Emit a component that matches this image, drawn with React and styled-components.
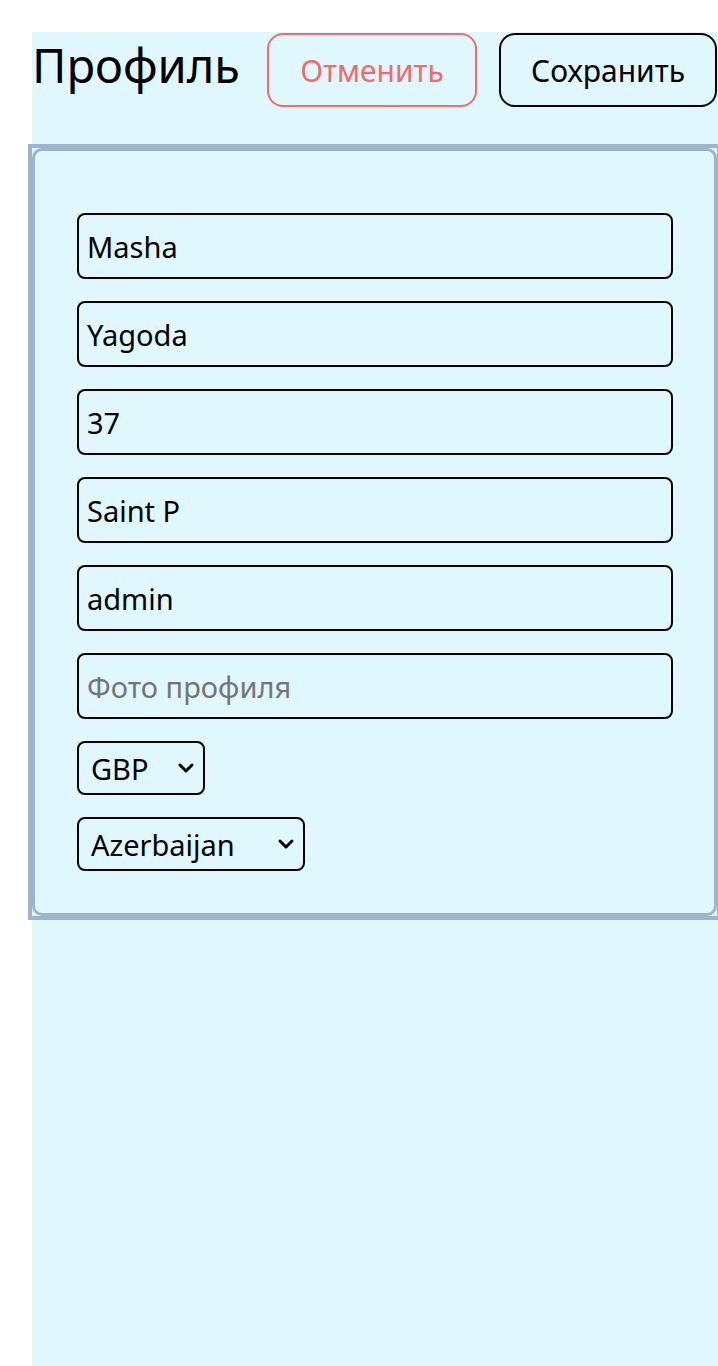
import React, { useState } from 'react';
import styled, { createGlobalStyle } from 'styled-components';
import { ChevronDown } from 'lucide-react';

const GlobalStyle = createGlobalStyle`
	body {
		margin: 0;
		font-family: 'Noto Sans', 'DejaVu Sans', sans-serif;
		background: #ffffff;
	}
`;

const fields = [
	{ name: 'firstName', value: 'Masha', placeholder: 'Имя' },
	{ name: 'lastName', value: 'Yagoda', placeholder: 'Фамилия' },
	{ name: 'age', value: '37', placeholder: 'Возраст' },
	{ name: 'city', value: 'Saint P', placeholder: 'Город' },
	{ name: 'role', value: 'admin', placeholder: 'Роль' },
	{ name: 'photo', value: '', placeholder: 'Фото профиля' },
];

const Dropdown = ({ width, value, onChange, options }) => (
	<SelectWrap $width={width}>
		<Select value={value} onChange={onChange}>
			{options.map((o) => (
				<option key={o}>{o}</option>
			))}
		</Select>
		<Chevron size={24} strokeWidth={3} />
	</SelectWrap>
);

// Exported Component
const App = () => {
	const [form, setForm] = useState(
		Object.fromEntries(fields.map((f) => [f.name, f.value]))
	);
	const [currency, setCurrency] = useState('GBP');
	const [country, setCountry] = useState('Azerbaijan');

	return (
		<>
			<GlobalStyle />
			<Page>
				<Header>
					<Title>Профиль</Title>
					<Button $variant='cancel' $width={210}>
						Отменить
					</Button>
					<Button $width={218}>Сохранить</Button>
				</Header>
				<Frame>
					<Card>
						{fields.map((f) => (
							<Input
								key={f.name}
								value={form[f.name]}
								placeholder={f.placeholder}
								onChange={(e) =>
									setForm({ ...form, [f.name]: e.target.value })
								}
							/>
						))}
						<Dropdown
							width={128}
							value={currency}
							onChange={(e) => setCurrency(e.target.value)}
							options={['GBP', 'USD', 'EUR', 'RUB']}
						/>
						<Dropdown
							width={228}
							value={country}
							onChange={(e) => setCountry(e.target.value)}
							options={['Azerbaijan', 'Armenia', 'Georgia', 'Russia']}
						/>
					</Card>
				</Frame>
			</Page>
		</>
	);
};

const Page = styled.main`
	margin: 32px 0 0 32px;
	width: 690px;
	min-height: calc(100vh - 32px);
	background: #e0f7fd;
`;

const Header = styled.header`
	display: flex;
	align-items: flex-start;
	gap: 22px;
	padding-top: 1px;
	height: 111px;
`;

const Title = styled.h1`
	margin: 0 5px 0 0;
	font-size: 47px;
	font-weight: 400;
	line-height: 64px;
	color: #000;
	white-space: nowrap;
`;

const Button = styled.button`
	flex: none;
	box-sizing: border-box;
	width: ${(p) => p.$width}px;
	height: 74px;
	padding: 0;
	background: transparent;
	border: 2px solid ${(p) => (p.$variant === 'cancel' ? '#f46b6b' : '#000')};
	border-radius: 16px;
	color: ${(p) => (p.$variant === 'cancel' ? '#f26a6a' : '#000')};
	font-family: inherit;
	font-size: 30px;
	cursor: pointer;
`;

const Frame = styled.section`
	margin-left: -4px;
	width: 685px;
	border: 4px solid #9eb4cc;
`;

const Card = styled.form`
	display: flex;
	flex-direction: column;
	align-items: flex-start;
	gap: 22px;
	padding: 62px 40px 42px 42px;
	border: 3px solid #9eb4cc;
	border-radius: 10px;
`;

const Input = styled.input`
	box-sizing: border-box;
	width: 596px;
	height: 66px;
	padding: 0 8px;
	border: 2px solid #000;
	border-radius: 8px;
	background: transparent;
	font-family: inherit;
	font-size: 29px;
	color: #000;
	outline: none;
	&::placeholder {
		color: #757575;
	}
`;

const SelectWrap = styled.div`
	position: relative;
	width: ${(p) => p.$width}px;
	height: 54px;
`;

const Select = styled.select`
	appearance: none;
	box-sizing: border-box;
	width: 100%;
	height: 100%;
	padding: 0 12px;
	border: 2px solid #000;
	border-radius: 8px;
	background: transparent;
	font-family: inherit;
	font-size: 29px;
	color: #000;
	cursor: pointer;
`;

const Chevron = styled(ChevronDown)`
	position: absolute;
	right: 7px;
	top: 15px;
	pointer-events: none;
	color: #000;
`;

export default App;
